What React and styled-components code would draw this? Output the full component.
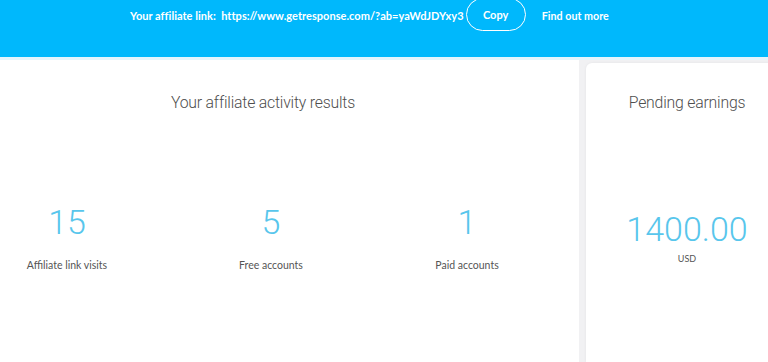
import React from 'react';
import styled, { createGlobalStyle } from 'styled-components';

const Global = createGlobalStyle`
  html, body {
    margin: 0;
    padding: 0;
    background: #f1f1f3;
    overflow: hidden;
  }
  body {
    width: 768px;
    height: 362px;
  }
`

const Banner = styled.div`
  height: 57px;
  background: #00b8fc;
  display: flex;
  align-items: flex-start;
  padding-left: 130px;
  font-family: Lato, "Liberation Sans", sans-serif;
  font-weight: 700;
  font-size: 11px;
  letter-spacing: 0.03px;
  color: #fff;
  border-bottom: 3px solid #e4f5fd;
`

const LinkText = styled.div`
  margin-top: 9px;
  line-height: 13px;
  white-space: pre;
`

const CopyButton = styled.button`
  margin: -2px 0 0 2px;
  width: 60px;
  height: 33px;
  border: 1px solid #fff;
  border-radius: 17px;
  background: transparent;
  color: #fff;
  font: inherit;
  padding: 0;
  cursor: pointer;
`

const FindOut = styled.a`
  margin: 9px 0 0 16px;
  line-height: 13px;
  font-size: 10.7px;
  color: #fff;
  text-decoration: none;
`

const Main = styled.div`
  display: flex;
  gap: 7px;
  height: 302px;
`

const Card = styled.div`
  background: #fff;
  width: ${p => p.w}px;
  flex-shrink: 0;
  margin-top: ${p => p.top || 0}px;
  border-radius: ${p => p.radius || 0}px 0 0 0;
  box-shadow: ${p => p.shadow ? '0 0 3px rgba(0,0,0,0.06)' : 'none'};
  padding-top: ${p => 34 - (p.top || 0)}px;
  box-sizing: border-box;
  display: flex;
  flex-direction: column;
`

const Inner = styled.div`
  width: ${p => p.w}px;
  margin-left: ${p => p.left || 0}px;
  display: flex;
  flex-direction: column;
  align-items: center;
`

const Title = styled.div`
  font-family: Roboto, "Liberation Sans", sans-serif;
  font-weight: 300;
  font-size: 15.8px;
  line-height: 18px;
  color: #4e4e4e;
  letter-spacing: -0.2px;
`

const Stats = styled.div`
  display: grid;
  grid-template-columns: ${p => p.cols};
  margin-top: ${p => p.gap}px;
`

const Stat = styled.div`
  display: flex;
  flex-direction: column;
  align-items: center;
`

const Value = styled.div`
  font-family: Roboto, "Liberation Sans", sans-serif;
  font-weight: 300;
  font-size: 34px;
  line-height: 40px;
  color: #58c6ec;
`

const Label = styled.div`
  margin-top: ${p => p.gap}px;
  font-family: Lato, "Liberation Sans", sans-serif;
  font-size: ${p => p.size}px;
  line-height: 14px;
  color: #555;
`

const stats = [
  { value: '15', label: 'Affiliate link visits' },
  { value: '5', label: 'Free accounts' },
  { value: '1', label: 'Paid accounts' },
]

export default function App() {
  return (
    <>
      <Global />
      <Banner>
        <LinkText>Your affiliate link:  https://www.getresponse.com/?ab=yaWdJDYxy3</LinkText>
        <CopyButton>Copy</CopyButton>
        <FindOut href="#">Find out more</FindOut>
      </Banner>
      <Main>
        <Card w={579}>
          <Inner w={592} left={-33}>
            <Title>Your affiliate activity results</Title>
            <Stats cols="200px 208px 184px" gap={90}>
              {stats.map(s => (
                <Stat key={s.label}>
                  <Value>{s.value}</Value>
                  <Label gap={16} size={10.5}>{s.label}</Label>
                </Stat>
              ))}
            </Stats>
          </Inner>
        </Card>
        <Card w={202} top={3} radius={6} shadow>
          <Inner w={202}>
            <Title>Pending earnings</Title>
            <Stats cols="202px" gap={97}>
              <Stat>
                <Value>1400.00</Value>
                <Label gap={3} size={9}>USD</Label>
              </Stat>
            </Stats>
          </Inner>
        </Card>
      </Main>
    </>
  );
}
